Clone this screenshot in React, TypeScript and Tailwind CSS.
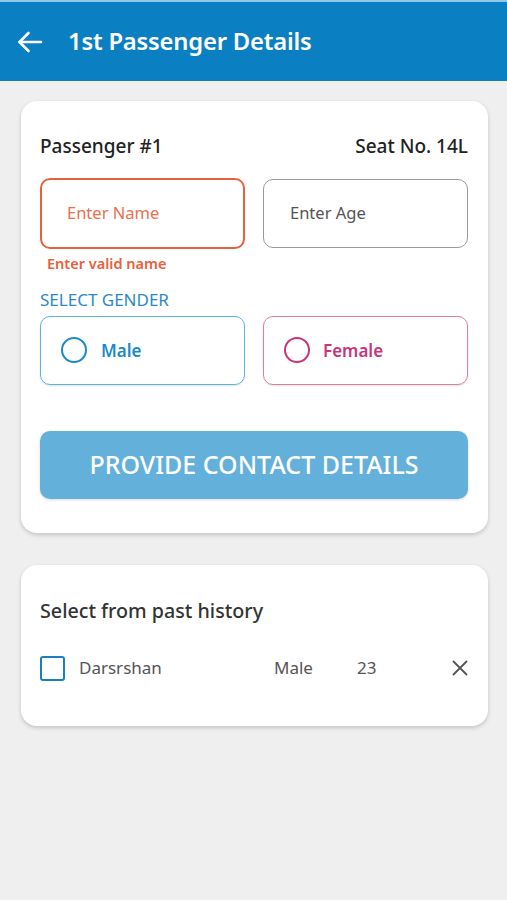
import React from "react";

export default function App() {
  return (
    <div className="min-h-[900px] w-full bg-[#efefef]" style={{ fontFamily: '"Noto Sans", "Open Sans", sans-serif' }}>
      <div className="h-[2px] bg-[#8fc8ea]" />
      <header className="flex h-[79px] items-center bg-[#0a7fc2] text-white">
        <div className="ml-[17px] flex h-[26px] w-[26px] items-center justify-center">
          <svg width="26" height="22" viewBox="0 0 26 22" fill="none" stroke="white" strokeWidth="2.6" strokeLinecap="round" strokeLinejoin="round">
            <path d="M24 11H2.5" />
            <path d="M11.5 2L2.5 11l9 9" />
          </svg>
        </div>
        <h1 className="ml-[25px] text-[23.8px] font-semibold tracking-[-0.2px]">1st Passenger Details</h1>
      </header>

      <div className="px-[21px] pt-[20px] pr-[19px]">
        <div className="rounded-[16px] bg-white pl-[19px] pr-[20px] pb-[34px] pt-[31px] shadow-[0_2px_4px_rgba(0,0,0,0.18)]">
          <div className="flex items-center justify-between text-[#222]">
            <span className="text-[19px] font-medium">Passenger #1</span>
            <span className="text-[19px] font-medium">Seat No. 14L</span>
          </div>
          <div className="mt-[17px] grid grid-cols-2 gap-[18px]">
            <div>
              <div className="flex h-[71px] items-center rounded-[10px] border-2 border-[#e8603c] pl-[25px] text-[16.5px] text-[#e8704f]">
                Enter Name
              </div>
              <div className="mt-[4px] pl-[7px] text-[14.5px] font-semibold text-[#e8603c]">Enter valid name</div>
            </div>
            <div className="mt-[1px] flex h-[69px] items-center rounded-[10px] border border-[#9a9a9a] pl-[26px] text-[16.5px] text-[#555]">
              Enter Age
            </div>
          </div>
          <div className="mt-[13px] text-[17px] text-[#2b8ac6]">SELECT GENDER</div>
          <div className="mt-[3px] grid grid-cols-2 gap-[18px]">
            <div className="flex h-[69px] items-center rounded-[10px] border border-[#5bb5e0] pl-[20px] shadow-[0_1px_2px_rgba(0,0,0,0.12)]">
              <span className="h-[26px] w-[26px] rounded-full border-[2.5px] border-[#1a8ac8]" />
              <span className="ml-[14px] text-[17px] font-semibold text-[#1a8ac8]">Male</span>
            </div>
            <div className="flex h-[69px] items-center rounded-[10px] border border-[#dc7fa4] pl-[20px] shadow-[0_1px_2px_rgba(0,0,0,0.12)]">
              <span className="h-[26px] w-[26px] rounded-full border-[2.5px] border-[#c8357a]" />
              <span className="ml-[13px] text-[17px] font-semibold text-[#c8357a]">Female</span>
            </div>
          </div>
          <button className="mt-[46px] flex h-[68px] w-full items-center justify-center rounded-[10px] bg-[#63b0db] text-[25px] font-medium text-white shadow-[0_1px_3px_rgba(0,0,0,0.15)]">
            PROVIDE CONTACT DETAILS
          </button>
        </div>

        <div className="mt-[32px] rounded-[16px] bg-white pl-[19px] pr-[20px] pb-[45px] pt-[31px] shadow-[0_2px_4px_rgba(0,0,0,0.18)]">
          <div className="text-[19.7px] font-medium text-[#333]">Select from past history</div>
          <div className="mt-[30px] flex items-center">
            <span className="h-[25px] w-[25px] rounded-[3px] border-2 border-[#1a7fc0]" />
            <span className="ml-[14px] w-[195px] text-[17px] text-[#555]">Darsrshan</span>
            <span className="w-[83px] text-[17px] text-[#555]">Male</span>
            <span className="text-[17px] text-[#555]">23</span>
            <span className="ml-auto">
              <svg width="16" height="16" viewBox="0 0 16 16" stroke="#555" strokeWidth="1.8" strokeLinecap="round">
                <path d="M1.5 1.5l13 13M14.5 1.5l-13 13" />
              </svg>
            </span>
          </div>
        </div>
      </div>
    </div>
  );
}
